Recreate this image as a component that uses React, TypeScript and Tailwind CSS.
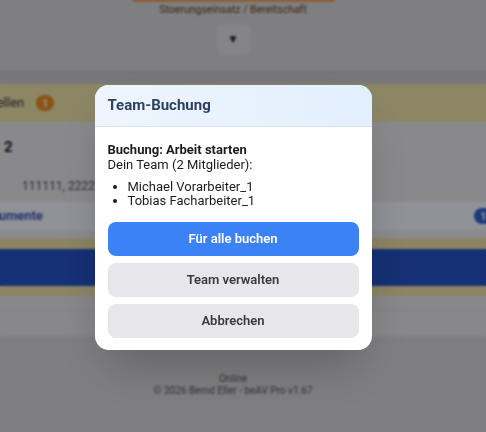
import React from "react";

const members = ["Michael Vorarbeiter_1", "Tobias Facharbeiter_1"];

// Page behind the dialog (dimmed by the overlay)
const PageBehind = () => {
  return (
    <div className="flex h-[432px] flex-col bg-[#d4d4d8]">
      <header className="flex h-[72px] flex-col items-center border-b border-[#bfbfc5] pr-5">
        <div className="h-[2px] w-[203px] rounded-b bg-[#e8a05c]" />
        <p className="mt-[1px] text-[10.5px] leading-[14px] text-[#6e3e24]">
          Stoerungseinsatz / Bereitschaft
        </p>
        <button className="mt-[7px] flex h-[30px] w-[33px] items-center justify-center rounded-md bg-[#dedee2] text-[12px] text-[#2a2a2a]">
          ▼
        </button>
      </header>
      <div className="h-[12px] bg-[#c6c6cc]" />

      <div className="flex h-[38px] items-center gap-3 overflow-hidden bg-[#ebdfa9]">
        <span className="-ml-[29px] text-[13px] text-[#3a3a3a]">Bestellen</span>
        <span className="flex h-[16px] w-[18px] items-center justify-center rounded-full bg-[#e98c1e] text-[10px] font-bold text-white">
          1
        </span>
      </div>

      <div className="flex h-[80px] flex-col bg-[#e5e5ea]">
        <p className="mt-[14px] pl-1 text-[15px] font-bold text-[#222]">2</p>
        <p className="mt-[18px] pl-[22px] text-[12px] text-[#555]">
          111111, 222222, 333333
        </p>
      </div>

      <div className="flex h-[28px] items-center justify-between overflow-hidden bg-[#eef3fc]">
        <span className="-ml-[24px] text-[13px] font-semibold text-[#3a4fb8]">Dokumente</span>
        <span className="-mr-[6px] flex h-[16px] w-[18px] items-center justify-center rounded-full bg-[#3360d0] text-[10px] font-bold text-white">
          1
        </span>
      </div>
      <div className="h-[8px] bg-[#e8e8ec]" />
      <div className="h-[11px] bg-[#e9dda6]" />
      <div className="h-[37px] bg-[#2550c4]" />
      <div className="h-[10px] bg-[#e9dda6]" />
      <div className="h-[15px] border-b border-[#d8d8dc] bg-[#e2e2e6]" />
      <div className="h-[25px] bg-[#e2e2e6]" />

      <footer className="flex flex-col items-center pr-5 pt-[37px] text-[10px] leading-[12px] text-[#58585c]">
        <p>Online</p>
        <p>© 2026 Bernd Eller - beAV Pro v1.67</p>
      </footer>
    </div>
  );
};

const TeamBookingDialog = () => {
  return (
    <div className="w-[277px] overflow-hidden rounded-[14px] bg-white shadow-2xl">
      <div className="flex h-[42px] items-center border-b border-[#d9e3ef] bg-gradient-to-r from-[#eef5fd] to-[#e2effd] px-[13px]">
        <h2 className="text-[15px] font-bold text-[#2d3f63]">Team-Buchung</h2>
      </div>
      <div className="px-[13px] pb-[12px] pt-[15px] text-[13px] leading-[15px] text-[#1c1c1e]">
        <p className="font-bold">Buchung: Arbeit starten</p>
        <p>Dein Team (2 Mitglieder):</p>
        <ul className="mt-[8px] list-disc pl-[20px] leading-[14px]">
          {members.map((m) => (
            <li key={m}>{m}</li>
          ))}
        </ul>
        <div className="mt-[14px] flex flex-col gap-[7px]">
          <button className="h-[34px] rounded-lg bg-[#3b82f6] font-semibold text-white">
            Für alle buchen
          </button>
          <button className="h-[34px] rounded-lg bg-[#e6e6eb] font-semibold text-[#3a3a3c]">
            Team verwalten
          </button>
          <button className="h-[34px] rounded-lg bg-[#e6e6eb] font-semibold text-[#3a3a3c]">
            Abbrechen
          </button>
        </div>
      </div>
    </div>
  );
};

export default function App() {
  return (
    <div className="relative h-[432px] w-full overflow-hidden font-['Roboto',sans-serif]">
      <PageBehind />
      <div className="absolute inset-0 flex items-center justify-center bg-black/40 pr-5 pt-[2px] backdrop-blur-[1px]">
        <TeamBookingDialog />
      </div>
    </div>
  );
}
